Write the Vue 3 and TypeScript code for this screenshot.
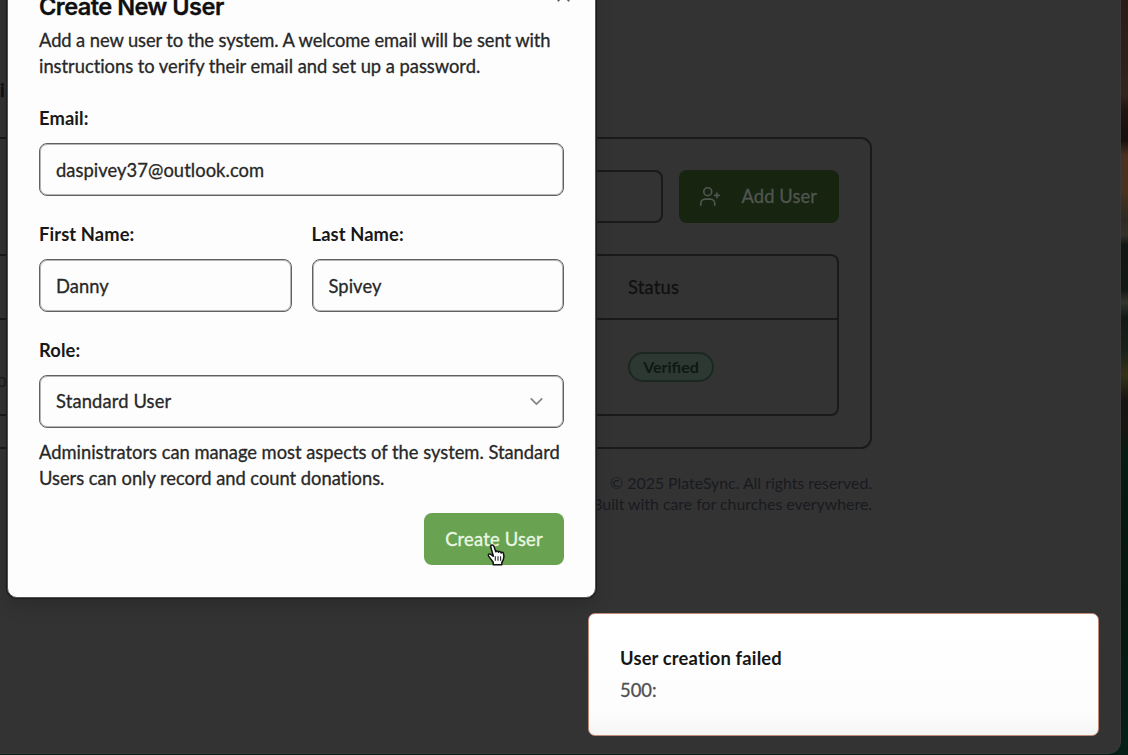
<script setup lang="ts">
import { ref } from 'vue'

const email = ref('daspivey37@outlook.com')
const firstName = ref('Danny')
const lastName = ref('Spivey')
const role = ref('Standard User')
</script>

<template>
  <div class="desktop">
    <div class="window">
      <header class="page-head"><span>i</span></header>
      <section class="card">
        <div class="toolbar">
          <div class="search"></div>
          <div class="add-user">
            <svg width="21" height="21" viewBox="0 0 24 24" fill="none" stroke="currentColor" stroke-width="1.9" stroke-linecap="round" stroke-linejoin="round">
              <path d="M2 22v-2a5 5 0 0 1 5-5h6a5 5 0 0 1 5 5v2" />
              <circle cx="10" cy="6.500" r="4.500" />
              <path d="M20.500 8v5.500M17.800 10.750h5.400" />
            </svg>
            <span class="add-label">Add User</span>
          </div>
        </div>
        <div class="table">
          <div class="row head"><span class="first"></span><span class="status">Status</span></div>
          <div class="row body"><span class="first domain">o</span><span class="badge">Verified</span></div>
        </div>
      </section>
      <footer class="footer">
        <div class="copyright">© 2025 PlateSync. All rights reserved.</div>
        <div class="tagline">Built with care for churches everywhere.</div>
      </footer>
    </div>

    <div class="dialog">
      <div class="dialog-head">
        <h2>Create New User</h2>
        <svg class="close" width="21" height="21" viewBox="0 0 24 24" fill="none" stroke="currentColor" stroke-width="2" stroke-linecap="round">
          <path d="M18 6L6 18M6 6l12 12" />
        </svg>
      </div>
      <p class="intro">
        <span class="line i1">Add a new user to the system. A welcome email will be sent with</span>
        <span class="line i2">instructions to verify their email and set up a password.</span>
      </p>
      <div class="field">
        <label>Email:</label>
        <div class="input"><span>{{ email }}</span></div>
      </div>
      <div class="pair">
        <div class="field">
          <label>First Name:</label>
          <div class="input"><span>{{ firstName }}</span></div>
        </div>
        <div class="field">
          <label>Last Name:</label>
          <div class="input"><span>{{ lastName }}</span></div>
        </div>
      </div>
      <div class="field">
        <label>Role:</label>
        <div class="input select">
          <span>{{ role }}</span>
          <svg width="21" height="21" viewBox="0 0 24 24" fill="none" stroke="#858585" stroke-width="2" stroke-linecap="round" stroke-linejoin="round">
            <path d="M6 9l6 6 6-6" />
          </svg>
        </div>
      </div>
      <p class="hint">
        <span class="line h1">Administrators can manage most aspects of the system. Standard</span>
        <span class="line h2">Users can only record and count donations.</span>
      </p>
      <div class="actions"><button type="button">Create User</button></div>
    </div>

    <div class="toast">
      <div class="toast-title">User creation failed</div>
      <div class="toast-text">500:</div>
    </div>

    <svg class="cursor" width="20" height="24" viewBox="0 0 20 24">
      <path d="M6.300 2C5 2 4.500 3.200 4.900 4.400L7.400 13.300 4.900 11.300C3.500 10.300 1.600 11.500 2.600 13.100L7.200 19.300V21.800H15.800V19.500C18 16.500 18.200 13 17.400 10.300 17 8.900 15.500 8.900 15.100 10 14.700 8.300 13 8.100 12.500 9.300 12 7.800 10.400 7.700 9.800 8.800L7.900 3.200C7.600 2.400 7 2 6.300 2Z" fill="#fff" stroke="#111" stroke-width="1.5" stroke-linejoin="round" />
      <path d="M9.300 13.200v4.600M12 13.200v4.600M14.600 13.200v4.600" stroke="#222" stroke-width="1.100" />
    </svg>
  </div>
</template>

<style>
body {
  background: #101010;
}
</style>

<style scoped>
.desktop {
  position: relative;
  width: 1128px;
  height: 755px;
  overflow: hidden;
  font-family: Lato, 'Liberation Sans', sans-serif;
  font-size: 18.350px;
  font-variant-ligatures: none;
  -webkit-text-stroke: 0.300px currentColor;
  background: linear-gradient(to bottom, #2b1d16 0, #30221a 70px, #35261d 95px, #20140f 110px, #17100d 140px, #4a3020 155px, #49331f 190px, #2e2b22 220px, #343229 235px, #111713 245px, #121a16 290px, #34362c 302px, #111a15 318px, #19221a 350px, #353219 375px, #171510 400px, #17160f 430px, #071c13 452px, #06170f 600px, #062018 755px);
}
.window {
  box-sizing: border-box;
  width: 1121px;
  height: 754px;
  border-right: 1px solid #3a3a3a;
  border-bottom: 1px solid #3a3a3a;
  border-radius: 0 0 13px 0;
  background: #333;
  color: #101012;
}
.page-head {
  box-sizing: border-box;
  height: 137px;
  padding-top: 79px;
  line-height: 22px;
  font-weight: 700;
}
.card {
  box-sizing: border-box;
  width: 912px;
  height: 312px;
  margin-left: -40px;
  padding: 31px 31.500px;
  border: 2px solid #1a1a1c;
  border-radius: 11px;
}
.toolbar {
  display: flex;
  justify-content: flex-end;
  gap: 16px;
}
.search {
  box-sizing: border-box;
  width: 300px;
  height: 53px;
  border: 2px solid #1a1a1c;
  border-radius: 8px;
}
.add-user {
  box-sizing: border-box;
  display: flex;
  align-items: center;
  width: 160px;
  height: 53px;
  padding-left: 20px;
  padding-bottom: 1px;
  gap: 22px;
  border-radius: 8px;
  background: #162410;
  color: #505650;
}
.add-label {
  white-space: nowrap;
  letter-spacing: 0.080px;
}
.table {
  box-sizing: border-box;
  height: 162px;
  margin-top: 31px;
  border: 2px solid #1a1a1c;
  border-radius: 8px;
}
.row {
  box-sizing: border-box;
  display: flex;
  align-items: center;
}
.head {
  height: 64px;
  padding-bottom: 1px;
  border-bottom: 2px solid #1a1a1c;
}
.body {
  height: 94px;
  padding-bottom: 1px;
}
.first {
  box-sizing: border-box;
  width: 632.500px;
}
.domain {
  padding-top: 26px;
  padding-left: 1px;
  color: #202023;
}
.status {
  letter-spacing: 0.200px;
}
.badge {
  box-sizing: border-box;
  width: 86px;
  height: 30px;
  border: 2px solid #1a2820;
  border-radius: 15px;
  background: #2c3831;
  color: #0d1912;
  font-size: 16px;
  font-weight: 700;
  font-variant-ligatures: normal;
  -webkit-text-stroke: 0;
  line-height: 26px;
  text-align: center;
}
.footer {
  width: 872px;
  padding-top: 23px;
  text-align: right;
  font-size: 15.850px;
  line-height: 21px;
  color: #191a1f;
  -webkit-text-stroke: 0;
}
.dialog {
  box-sizing: border-box;
  position: absolute;
  left: 7px;
  top: -40px;
  width: 589px;
  height: 638px;
  padding: 0 31px;
  border: 1px solid #555;
  border-radius: 10px;
  background: #fdfdfd;
  color: #282828;
  box-shadow: 0 0 0 1px #1c1c1c, 0 8px 18px rgba(0, 0, 0, 0.15);
}
.dialog-head {
  display: flex;
  justify-content: space-between;
  height: 66px;
  padding-top: 27px;
  box-sizing: border-box;
}
h2 {
  margin: 5px 0 0;
  color: #101010;
  font-family: Inter, 'Liberation Sans', sans-serif;
  font-size: 23.600px;
  font-weight: 600;
  line-height: 28px;
  letter-spacing: -0.023em;
}
.close {
  margin-right: -10px;
  margin-top: -3px;
  color: #555;
}
p {
  margin: 0;
  line-height: 26.200px;
}
.line {
  display: block;
  white-space: nowrap;
}
.i1 {
  letter-spacing: -0.090px;
}
.i2 {
  letter-spacing: -0.025px;
}
.h1 {
  letter-spacing: -0.015px;
}
.h2 {
  letter-spacing: -0.025px;
}
.intro {
  height: 73px;
}
.field {
  flex: 1;
  height: 116.200px;
}
label {
  display: block;
  height: 42.500px;
  padding-top: 6px;
  box-sizing: border-box;
  color: #181818;
  font-weight: 700;
  line-height: 24px;
  letter-spacing: 0.100px;
  -webkit-text-stroke: 0;
}
.input {
  box-sizing: border-box;
  display: flex;
  align-items: center;
  justify-content: space-between;
  height: 53px;
  padding: 1px 16px 0;
  border: 1px solid #606262;
  border-radius: 8px;
  background: #fdfdfd;
  box-shadow: inset 0 0 0 1px #b4b6b6;
  letter-spacing: 0.060px;
}
.select {
  padding-top: 0;
  letter-spacing: 0.140px;
}
.pair {
  display: flex;
  gap: 20px;
}
.hint {
  height: 74px;
  margin-top: -10px;
}
.actions {
  display: flex;
  justify-content: flex-end;
}
button {
  width: 140px;
  height: 52px;
  padding: 0;
  border: 0;
  border-radius: 8px;
  background: #69a352;
  color: #eaf8e4;
  font: inherit;
  letter-spacing: 0.200px;
}
.toast {
  box-sizing: border-box;
  position: absolute;
  left: 588px;
  top: 613px;
  width: 511px;
  height: 123px;
  padding: 31px 31px;
  border: 1px solid #c08a78;
  border-radius: 7px;
  background: linear-gradient(to bottom, #fff 0, #fefdfe 80%, #f6f5f5 100%);
}
.toast-title {
  color: #161616;
  font-weight: 700;
  line-height: 26px;
  letter-spacing: 0.170px;
  -webkit-text-stroke: 0;
}
.toast-text {
  margin-top: 6px;
  color: #505050;
  line-height: 26px;
}
.cursor {
  position: absolute;
  left: 486px;
  top: 543px;
}
</style>
